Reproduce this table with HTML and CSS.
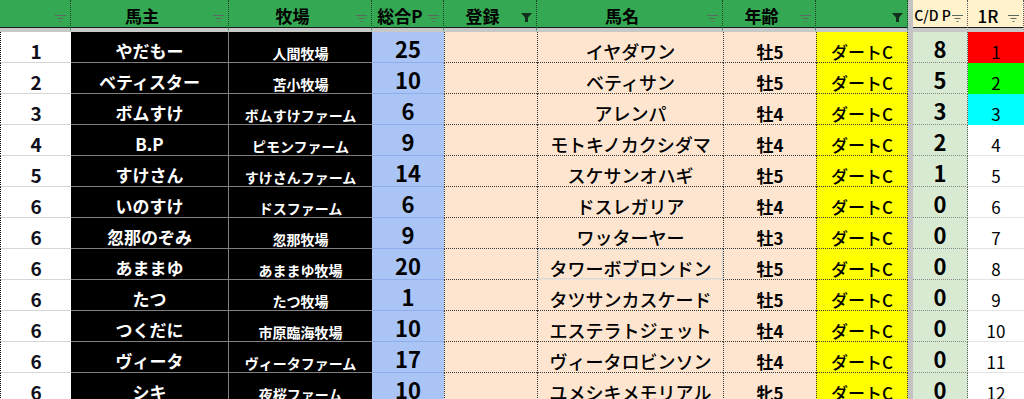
FILE: index.html
```html
<!DOCTYPE html>
<html lang="ja">
<head>
<meta charset="utf-8">
<title>Sheet</title>
<link rel="stylesheet" href="styles.css">
</head>
<body>
<svg class="defs" width="0" height="0" aria-hidden="true">
  <symbol id="fl" viewBox="0 0 11 7"><path d="M0 .5h11M2.5 3.5h6M4.5 6.5h2" stroke="#5a6a5e" fill="none"/></symbol>
  <symbol id="fa" viewBox="0 0 11 9"><path d="M0 0h11L7 4.5V9H4V4.5z" fill="#14301c"/></symbol>
</svg>
<div class="sheet">
  <div class="hd"><span class="lbl"></span><svg class="flt"><use href="#fl"/></svg></div>
  <div class="hd"><span class="lbl">馬主</span><svg class="flt"><use href="#fl"/></svg></div>
  <div class="hd"><span class="lbl">牧場</span><svg class="flt"><use href="#fl"/></svg></div>
  <div class="hd"><span class="lbl">総合P</span><svg class="flt"><use href="#fl"/></svg></div>
  <div class="hd"><span class="lbl">登録</span><svg class="flt on"><use href="#fa"/></svg></div>
  <div class="hd"><span class="lbl">馬名</span><svg class="flt"><use href="#fl"/></svg></div>
  <div class="hd"><span class="lbl">年齢</span><svg class="flt"><use href="#fl"/></svg></div>
  <div class="hd"><span class="lbl"></span><svg class="flt on"><use href="#fa"/></svg></div>
  <div class="sep"></div>
  <div class="hd cream"><span class="lbl sm">C/D P</span><svg class="flt"><use href="#fl"/></svg></div>
  <div class="hd cream"><span class="lbl sm r">1R</span><svg class="flt"><use href="#fl"/></svg></div>

  <div class="c ca">1</div><div class="c cb">やだもー</div><div class="c cc">人間牧場</div><div class="c cd">25</div><div class="c ce"></div><div class="c cf">イヤダワン</div><div class="c cg">牡5</div><div class="c ch">ダートC</div><div class="c ci">8</div><div class="c cj red">1</div>
  <div class="c ca">2</div><div class="c cb">ベティスター</div><div class="c cc">苫小牧場</div><div class="c cd">10</div><div class="c ce"></div><div class="c cf">ベティサン</div><div class="c cg">牡5</div><div class="c ch">ダートC</div><div class="c ci">5</div><div class="c cj grn">2</div>
  <div class="c ca">3</div><div class="c cb">ボムすけ</div><div class="c cc">ボムすけファーム</div><div class="c cd">6</div><div class="c ce"></div><div class="c cf">アレンパ</div><div class="c cg">牡4</div><div class="c ch">ダートC</div><div class="c ci">3</div><div class="c cj cyn">3</div>
  <div class="c ca">4</div><div class="c cb">B.P</div><div class="c cc">ピモンファーム</div><div class="c cd">9</div><div class="c ce"></div><div class="c cf">モトキノカクシダマ</div><div class="c cg">牡4</div><div class="c ch">ダートC</div><div class="c ci">2</div><div class="c cj">4</div>
  <div class="c ca">5</div><div class="c cb">すけさん</div><div class="c cc">すけさんファーム</div><div class="c cd">14</div><div class="c ce"></div><div class="c cf">スケサンオハギ</div><div class="c cg">牡5</div><div class="c ch">ダートC</div><div class="c ci">1</div><div class="c cj">5</div>
  <div class="c ca">6</div><div class="c cb">いのすけ</div><div class="c cc">ドスファーム</div><div class="c cd">6</div><div class="c ce"></div><div class="c cf">ドスレガリア</div><div class="c cg">牡4</div><div class="c ch">ダートC</div><div class="c ci">0</div><div class="c cj">6</div>
  <div class="c ca">6</div><div class="c cb">忽那のぞみ</div><div class="c cc">忽那牧場</div><div class="c cd">9</div><div class="c ce"></div><div class="c cf">ワッターヤー</div><div class="c cg">牡3</div><div class="c ch">ダートC</div><div class="c ci">0</div><div class="c cj">7</div>
  <div class="c ca">6</div><div class="c cb">あままゆ</div><div class="c cc">あままゆ牧場</div><div class="c cd">20</div><div class="c ce"></div><div class="c cf sel">タワーボブロンドン</div><div class="c cg">牡5</div><div class="c ch">ダートC</div><div class="c ci">0</div><div class="c cj">8</div>
  <div class="c ca">6</div><div class="c cb">たつ</div><div class="c cc">たつ牧場</div><div class="c cd">1</div><div class="c ce"></div><div class="c cf">タツサンカスケード</div><div class="c cg">牡5</div><div class="c ch">ダートC</div><div class="c ci">0</div><div class="c cj">9</div>
  <div class="c ca">6</div><div class="c cb">つくだに</div><div class="c cc">市原臨海牧場</div><div class="c cd">10</div><div class="c ce"></div><div class="c cf">エステラトジェット</div><div class="c cg">牡4</div><div class="c ch">ダートC</div><div class="c ci">0</div><div class="c cj">10</div>
  <div class="c ca">6</div><div class="c cb">ヴィータ</div><div class="c cc">ヴィータファーム</div><div class="c cd">17</div><div class="c ce"></div><div class="c cf">ヴィータロビンソン</div><div class="c cg">牡4</div><div class="c ch">ダートC</div><div class="c ci">0</div><div class="c cj">11</div>
  <div class="c ca">6</div><div class="c cb">シキ</div><div class="c cc">夜桜ファーム</div><div class="c cd">10</div><div class="c ce"></div><div class="c cf">ユメシキメモリアル</div><div class="c cg">牝5</div><div class="c ch">ダートC</div><div class="c ci">0</div><div class="c cj">12</div>
</div>
</body>
</html>
```
FILE: styles.css
```css
* { box-sizing: border-box; margin: 0; padding: 0; }
html, body { background: #fff; }
body {
  overflow: hidden;
  font-family: "Noto Sans CJK JP", "Noto Sans", sans-serif;
  color: #000;
}
.defs { position: absolute; width: 0; height: 0; }

.sheet {
  display: grid;
  grid-template-columns: 71px 158px 143px 72px 93px 186px 93px 92px 5px 55px 56px;
  grid-template-rows: 32px repeat(12, 31px);
  width: 1024px;
}
.sep { grid-column: 9; grid-row: 1 / 14; background: #c3c3c3; }

/* header */
.hd {
  display: flex;
  align-items: center;
  background: #34a853;
  border-bottom: 4px solid #c8c8c8;
  box-shadow: inset 0 -1px 0 #1c1c1c;
  border-right: 1px dotted #1d4427;
  padding-right: 4px;
}
.hd.cream { background: #fff2cc; border-right-color: #555; }
.hd .lbl {
  flex: 1;
  text-align: center;
  font-size: 17px;
  font-weight: 700;
  line-height: 1;
  padding-top: 2px;
  white-space: nowrap;
}
.hd .lbl.sm { font-size: 14px; font-weight: 500; }
.hd .lbl.r { font-size: 17px; font-weight: 500; }
.flt { flex: none; width: 11px; height: 7px; margin-top: 9px; }
.flt.on { height: 9px; margin-top: 7px; }

/* body cells */
.c {
  display: flex;
  justify-content: center;
  align-items: center;
  line-height: 1;
  white-space: nowrap;
}
.ca {
  border-left: 1px dotted #000;
  border-bottom: 1px solid #d6d6d6;
  font-size: 19px; font-weight: 700; color: #10101c;
  padding-top: 6px;
}
.cb, .cc {
  background: #000; color: #fff; font-weight: 700;
  border-bottom: 1px solid #7f7f7f;
}
.cb { font-size: 17px; border-right: 1px solid #7f7f7f; padding-top: 6px; }
.cc { font-size: 14px; padding-top: 11px; }
.cd {
  background: #a9c4f5;
  border-bottom: 1px solid #8fadea;
  font-size: 22px; font-weight: 700;
  padding-top: 1px;
}
.ce, .cf, .cg, .ch {
  background: #fde5d0;
  border-left: 1px dotted #3a3a3a;
  border-bottom: 1px dotted #3a3a3a;
}
.cf { font-size: 18px; font-weight: 500; padding-top: 8px; }
.cf.sel { box-shadow: inset 0 0 0 1px #d8d8d8; border-bottom-color: #d8d8d8; }
.cg { font-size: 17px; font-weight: 700; padding-top: 9px; }
.ch {
  background: #ffff00;
  border-right: 1px dotted #3a3a3a;
  font-size: 17px; font-weight: 500; padding-top: 9px;
}
.ci {
  background: #d9ead3;
  border-bottom: 1px dotted #8a8a8a;
  border-right: 1px dotted #555;
  font-size: 22px; font-weight: 700;
  padding-top: 1px;
}
.cj {
  border-bottom: 1px solid #e4e4e4;
  font-size: 17px; font-weight: 400;
  padding-top: 9px;
}
.cj.red { background: #ff0000; border-bottom-color: #ff0000; }
.cj.grn { background: #00ff00; border-bottom-color: #00ff00; }
.cj.cyn { background: #00ffff; border-bottom-color: #00ffff; }
```
